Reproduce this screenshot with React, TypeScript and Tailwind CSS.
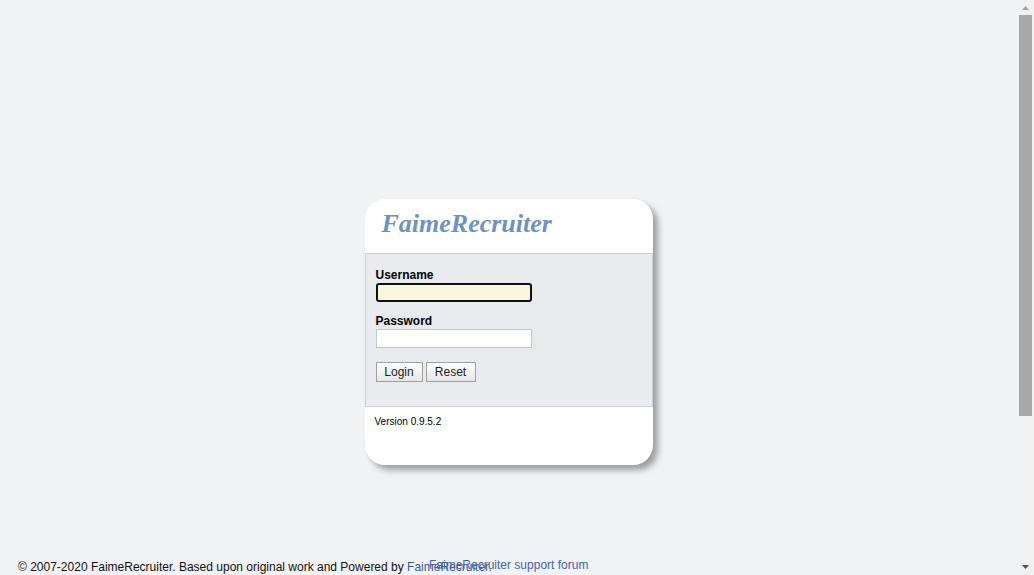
export default function App() {
  return (
    <div className="flex h-[575px] overflow-hidden bg-[#f1f2f4] font-['Liberation_Sans',Arial,sans-serif] text-black">
      <div className="relative min-h-[778px] flex-1">
        <div className="flex justify-center pt-[199px]">
          <div className="w-[288px] rounded-[20px] bg-white shadow-[5px_5px_6px_rgba(0,0,0,0.35)]">
            <div className="h-[54px] pl-[17px] pt-[10px]">
              <h1 className="font-['Liberation_Serif',serif] text-[26px] font-bold italic leading-[30px] text-[#6f92c1]">
                FaimeRecruiter
              </h1>
            </div>
            <div className="border border-[#cfd1d4] bg-[#e8eaed] px-[10px] pt-[14px] pb-[24px]">
              <label className="block text-[12px] font-bold leading-[15px]">Username</label>
              <div className="h-[19px] w-[156px] rounded-[3px] border-2 border-[#111] bg-[#faf8dc]" />
              <label className="mt-[12px] block text-[12px] font-bold leading-[15px]">Password</label>
              <div className="h-[19px] w-[156px] border border-[#c4c6c9] bg-white" />
              <div className="mt-[14px] flex gap-[3px]">
                <button className="h-[20px] w-[47px] border border-[#a0a0a0] bg-gradient-to-b from-white to-[#e6e6e6] text-[12px] leading-[18px] text-[#222]">
                  Login
                </button>
                <button className="h-[20px] w-[50px] border border-[#a0a0a0] bg-gradient-to-b from-white to-[#e6e6e6] text-[12px] leading-[18px] text-[#222]">
                  Reset
                </button>
              </div>
            </div>
            <div className="h-[58px] pl-[10px] pt-[9px] text-[10px] leading-[12px]">Version 0.9.5.2</div>
          </div>
        </div>
        <div className="relative mt-[95px] pl-[18px] text-[12px] leading-[14px] text-[#111]">
          © 2007-2020 FaimeRecruiter. Based upon original work and Powered by{' '}
          <a className="text-[#3b5a9a]">FaimeRecruiter.</a>
          <a className="absolute top-[-2px] left-[429px] text-[#3f66a3]">FaimeRecruiter support forum</a>
        </div>
      </div>
      {/* scrollbar */}
      <div className="flex w-[17px] flex-col items-center bg-[#f1f1f1]">
        <svg width="17" height="15" viewBox="0 0 17 15" className="shrink-0">
          <path d="M5 10 L12 10 L8.5 6 Z" fill="#a3a3a3" />
        </svg>
        <div className="ml-[-1px] h-[401px] w-[13px] bg-[#a8a8a8]" />
        <div className="flex-1" />
        <svg width="17" height="15" viewBox="0 0 17 15" className="shrink-0">
          <path d="M5 5 L12 5 L8.5 9 Z" fill="#505050" />
        </svg>
      </div>
    </div>
  );
}
